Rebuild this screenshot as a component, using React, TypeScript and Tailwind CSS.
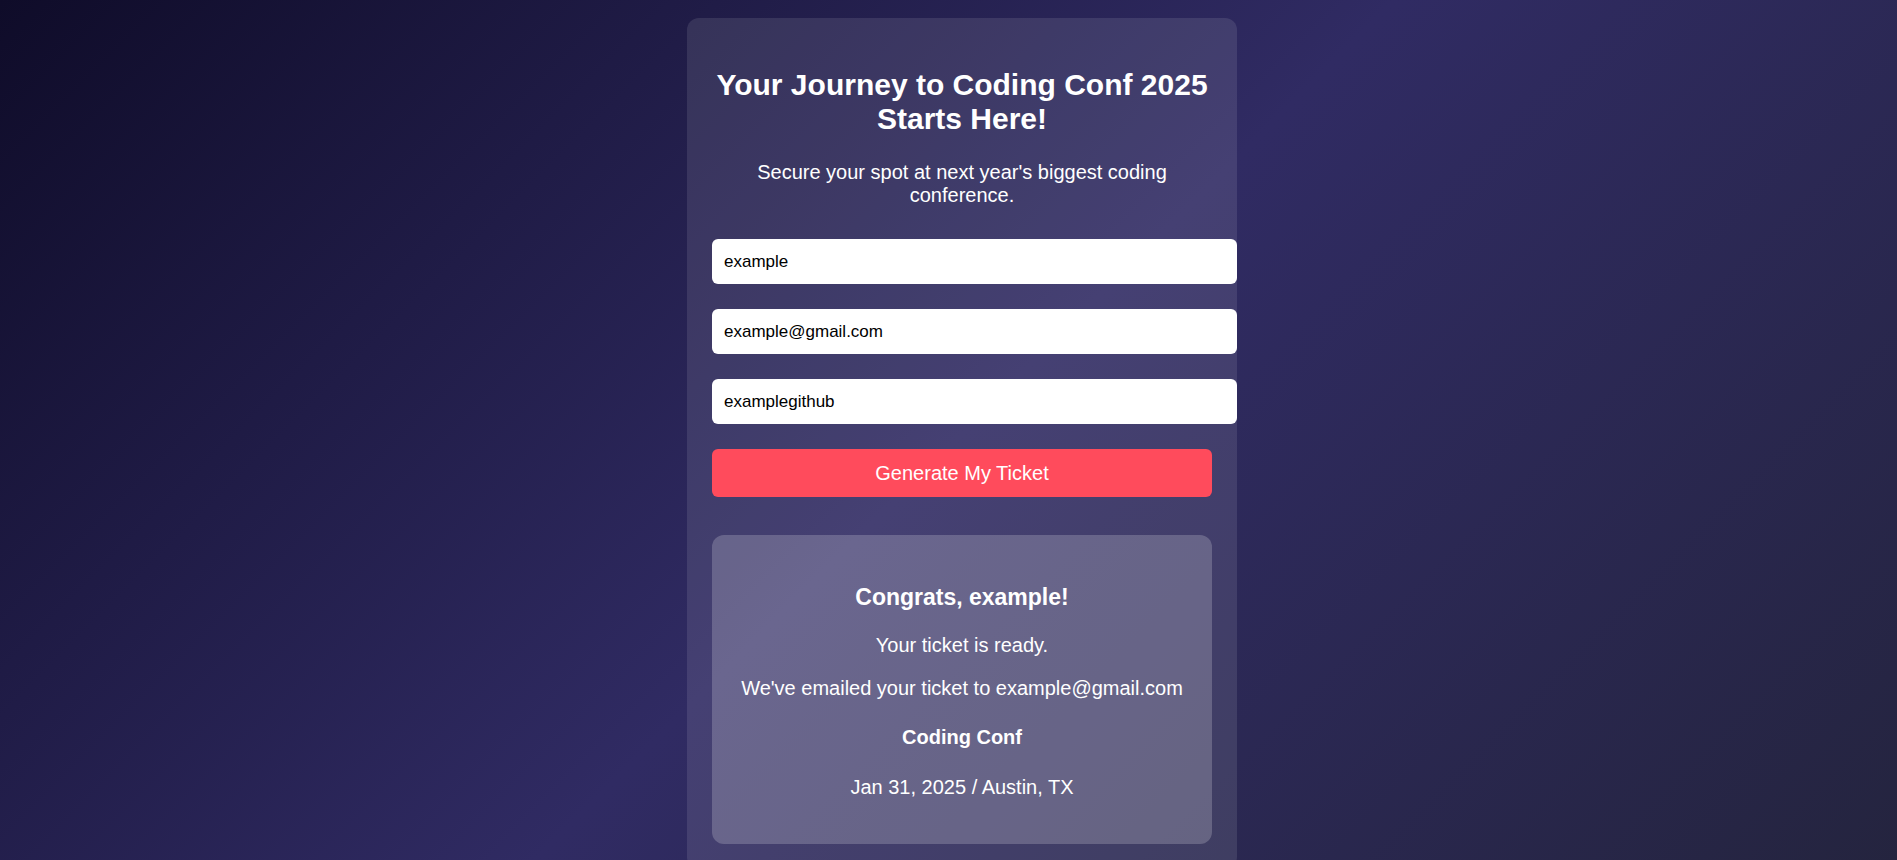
import { useState } from "react";
import type { FormEvent } from "react";

type FieldProps = {
  label: string;
  type: string;
  value: string;
  onChange: (value: string) => void;
};

function Field({ label, type, value, onChange }: FieldProps) {
  return (
    <div className="-mr-[25px]">
      <input
        aria-label={label}
        type={type}
        value={value}
        onChange={(event) => onChange(event.target.value)}
        className="block h-[45px] w-full rounded-md bg-white px-3 text-[17px] text-black outline-none"
      />
    </div>
  );
}

type TicketProps = { name: string; email: string };

function Ticket({ name, email }: TicketProps) {
  return (
    <section className="mt-[38px] rounded-xl bg-white/20 px-[25px] pt-[49px] pb-[45px]">
      <h2 className="text-[23px] leading-[27px] font-bold">Congrats, {name}!</h2>
      <p className="mt-[23px]">Your ticket is ready.</p>
      <p className="mt-5">We've emailed your ticket to {email}</p>
      <h3 className="mt-[26px] font-bold">Coding Conf</h3>
      <p className="mt-[27px]">Jan 31, 2025 / Austin, TX</p>
    </section>
  );
}

export default function App() {
  const [name, setName] = useState("example");
  const [email, setEmail] = useState("example@gmail.com");
  const [github, setGithub] = useState("examplegithub");

  const handleSubmit = (event: FormEvent) => event.preventDefault();

  return (
    <div className="h-screen overflow-x-hidden overflow-y-auto font-['Liberation_Sans',Arial,sans-serif] text-xl leading-[23px] text-white [scrollbar-width:none]">
      <div className="flex min-h-full items-start justify-center bg-[linear-gradient(135deg,#0f0c29,#302b63,#24243e)] pt-[18px] pb-[25px] pl-[27px]">
        <main className="w-full max-w-[550px] rounded-xl bg-white/10 p-[25px] text-center">
          <h1 className="mt-[25px] text-3xl leading-[34px] font-bold">
            Your Journey to Coding Conf 2025 Starts Here!
          </h1>
          <p className="mt-[25px]">Secure your spot at next year's biggest coding conference.</p>
          <form onSubmit={handleSubmit} className="mt-8 flex flex-col gap-[25px]">
            <Field label="Full name" type="text" value={name} onChange={setName} />
            <Field label="Email address" type="email" value={email} onChange={setEmail} />
            <Field label="GitHub username" type="text" value={github} onChange={setGithub} />
            <button type="submit" className="h-12 w-full cursor-pointer rounded-md bg-[#ff4b5c]">
              Generate My Ticket
            </button>
          </form>
          <Ticket name={name} email={email} />
        </main>
      </div>
    </div>
  );
}
